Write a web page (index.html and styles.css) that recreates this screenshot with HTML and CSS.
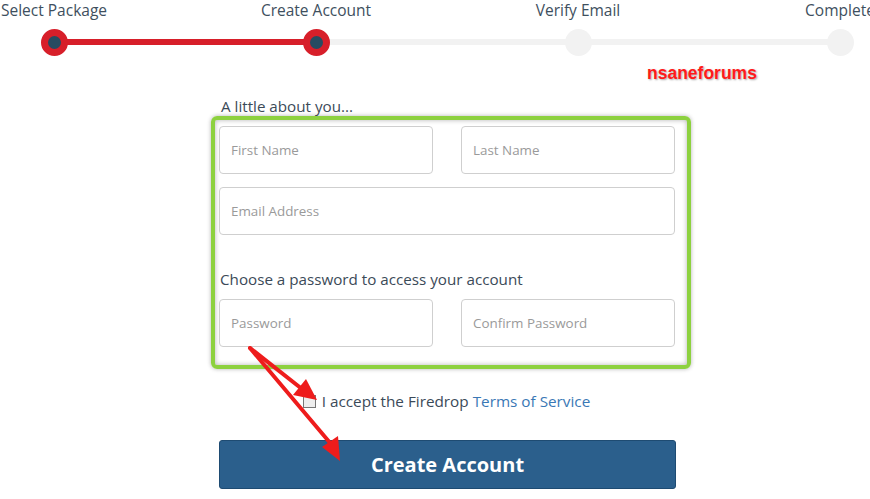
FILE: index.html
```html
<!DOCTYPE html>
<html>
<head>
<meta charset="utf-8">
<link rel="stylesheet" href="styles.css">
</head>
<body>
<div class="steps">
  <div class="track"><div class="track-done"></div></div>
  <div class="step done"><span class="step-label">Select Package</span><span class="dot"></span></div>
  <div class="step done"><span class="step-label">Create Account</span><span class="dot"></span></div>
  <div class="step"><span class="step-label">Verify Email</span><span class="dot"></span></div>
  <div class="step"><span class="step-label">Complete</span><span class="dot"></span></div>
</div>
<div class="watermark">nsaneforums</div>
<form class="form">
  <div class="section-title">A little about you...</div>
  <div class="highlight">
    <div class="row">
      <input class="field" type="text" placeholder="First Name">
      <input class="field" type="text" placeholder="Last Name">
    </div>
    <div class="row">
      <input class="field" type="text" placeholder="Email Address">
    </div>
    <div class="section-title pw-title">Choose a password to access your account</div>
    <div class="row">
      <input class="field" type="password" placeholder="Password">
      <input class="field" type="password" placeholder="Confirm Password">
    </div>
  </div>
  <label class="terms"><span class="box"></span>I accept the Firedrop&nbsp;<a class="link">Terms of Service</a></label>
  <button class="submit" type="button">Create Account</button>
</form>
<svg class="arrows" width="870" height="499" viewBox="0 0 870 499">
  <g stroke="#ee1c1c" stroke-width="4" stroke-linecap="round" fill="none">
    <line x1="250" y1="348" x2="302" y2="389"/>
    <line x1="250" y1="348" x2="331" y2="444"/>
  </g>
  <g fill="#ee1c1c">
    <polygon points="317,400 293,395 306,379"/>
    <polygon points="340,461 322,447 338,436"/>
  </g>
</svg>
</body>
</html>
```
FILE: styles.css
```css
html, body { margin: 0; padding: 0; background: #fff; }
body {
  width: 870px; height: 499px; overflow: hidden; position: relative;
  font-family: "Open Sans", "Noto Sans", sans-serif; color: #3b4a58;
}
.steps {
  position: relative;
  display: grid;
  grid-template-columns: repeat(4, 262px);
  margin-left: -77px;
  height: 60px;
}
.track {
  position: absolute; left: 131px; top: 39px;
  width: 786px; height: 6px; background: #f2f2f2;
}
.track-done { width: 262px; height: 100%; background: #d71f2a; }
.step { display: flex; flex-direction: column; align-items: center; position: relative; }
.step-label { font-size: 15.5px; line-height: 20px; white-space: nowrap; color: #3e4f5e; }
.dot {
  margin-top: 8.5px; width: 27px; height: 27px; border-radius: 50%;
  background: #f2f2f2; box-sizing: border-box;
}
.step.done .dot { background: #274b61; border: 7px solid #d71f2a; }
.watermark {
  position: absolute; left: 647px; top: 63px;
  font-family: "Liberation Sans", Arial, sans-serif; font-weight: bold; font-size: 17.5px;
  color: #ff1a1a; text-shadow: 1px 1px 2px rgba(0,0,0,.35);
}
.form { width: 456px; margin: 37px 0 0 219px; }
.section-title { font-size: 15.2px; line-height: 18px; margin-left: 2px; margin-bottom: 1px; }
.highlight {
  margin: 0 -16px 0 -8px;
  padding: 6px 12px 18px 4px;
  border: 4px solid #8dd13f; border-radius: 6px;
  box-shadow: inset 0 0 5px rgba(0,0,0,.3), 0 0 4px rgba(0,0,0,.3);
}
.row { display: flex; gap: 28px; margin-bottom: 13px; }
.row:last-child { margin-bottom: 0; }
.field {
  flex: 1; min-width: 0; height: 48px; box-sizing: border-box;
  border: 1px solid #cfcfcf; border-radius: 4px; padding: 0 11px;
  font-family: inherit; font-size: 13.4px; color: #555; background: #fff; margin: 0;
}
.field::placeholder { color: #9a9a9a; }
.pw-title { margin: 35px 0 11px 1px; }
.terms {
  display: flex; align-items: center; justify-content: center;
  margin: 23px 0 0 -1px; font-size: 15.3px; line-height: 18px; color: #3b4a58;
}
.box {
  width: 11px; height: 11px; border: 1px solid #777; background: #eee; margin-right: 6px;
}
.link { color: #3a78b5; }
.submit {
  display: block; width: 457px; height: 49px; margin-top: 30px;
  background: #2b5f8c; border: 1px solid #1e4b72; border-radius: 3px;
  color: #fff; font-family: inherit; font-weight: bold; font-size: 20px;
}
.arrows { position: absolute; left: 0; top: 0; pointer-events: none; }
```
